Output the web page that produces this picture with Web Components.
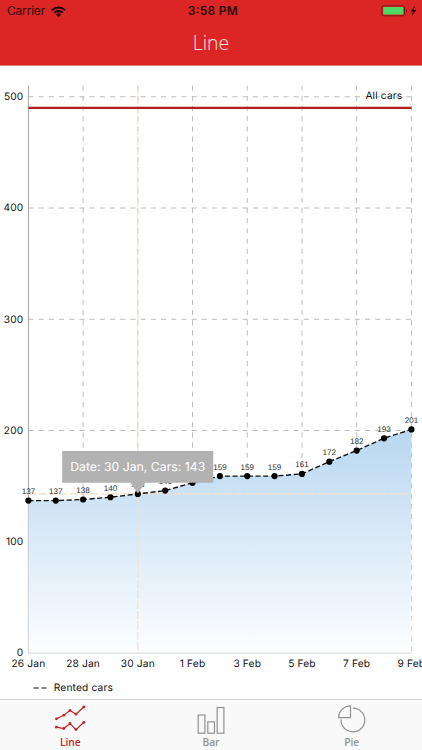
<!DOCTYPE html>
<html lang="en">
<head>
<meta charset="utf-8">
<meta name="viewport" content="width=device-width, initial-scale=1">
<title>Line</title>
<style>
  html, body {
    height: 100%;
    margin: 0;
  }

  body {
    font-family: Inter, "Liberation Sans", sans-serif;
    overflow: hidden;
  }
</style>
</head>
<body>

<cars-app>
  <status-bar slot="header" carrier="Carrier" time="3:58 PM"></status-bar>
  <nav-title slot="header">Line</nav-title>
  <line-chart></line-chart>
  <tab-bar slot="footer">
    <tab-item icon="line" active>Line</tab-item>
    <tab-item icon="bar">Bar</tab-item>
    <tab-item icon="pie">Pie</tab-item>
  </tab-bar>
</cars-app>

<script>
class CarsApp extends HTMLElement {

  constructor () {
    super()
    this.shadow = this.attachShadow({ mode: 'open' })
  }

  connectedCallback () {
    this.shadow.innerHTML =
    /*html*/`
    <style>
    :host {
      background-color: #fff;
      display: flex;
      flex-direction: column;
      height: 750px;
      overflow: hidden;
      width: 422px;
    }

    header {
      background-color: #dc2626;
      border-bottom: 1px solid #e98080;
      box-sizing: border-box;
      flex: none;
      height: 66px;
    }

    main {
      flex: 1;
      min-height: 0;
    }
    </style>

    <header><slot name="header"></slot></header>
    <main><slot></slot></main>
    <slot name="footer"></slot>
    `
  }
}

class StatusBar extends HTMLElement {

  constructor () {
    super()
    this.shadow = this.attachShadow({ mode: 'open' })
  }

  connectedCallback () {
    this.shadow.innerHTML =
    /*html*/`
    <style>
    :host {
      align-items: center;
      box-sizing: border-box;
      color: #2b0606;
      display: grid;
      font-size: 12px;
      grid-template-columns: 1fr auto 1fr;
      height: 22px;
      line-height: 22px;
      padding: 0 5px 0 7px;
    }

    svg {
      display: block;
    }

    .left, .right {
      align-items: center;
      display: flex;
      gap: 5px;
    }

    .right {
      justify-content: flex-end;
    }

    .time {
      font-weight: 600;
    }
    </style>

    <div class="left">
      <svg class="carrier" width="39" height="22">
        <text x="0" y="15.2" textLength="38.2" fill="currentColor">${this.getAttribute('carrier')}</text>
      </svg>
      <svg width="15" height="11" viewBox="0 0 15 11" fill="none" stroke="#1d0303" stroke-width="2.1">
        <path d="M.9 4.2a9.4 9.4 0 0 1 13.2 0"/>
        <path d="M3.3 6.8a6 6 0 0 1 8.4 0"/>
        <path d="M7.5 10.9L5.1 8.5a3.4 3.4 0 0 1 4.8 0z" fill="#1d0303" stroke="none"/>
      </svg>
    </div>
    <svg class="time" width="51" height="22">
      <text x=".8" y="15.2" textLength="50" fill="currentColor">${this.getAttribute('time')}</text>
    </svg>
    <div class="right">
      <svg width="36" height="12" viewBox="0 0 36 12">
        <rect x=".9" y=".8" width="22.6" height="10" rx="1.8" fill="#dc2626" stroke="#861313"/>
        <rect x="2.2" y="2.1" width="20" height="7.4" rx=".8" fill="#50d965"/>
        <path d="M25 4v3.6c1.4-.6 1.4-3 0-3.6z" fill="#861313"/>
        <path d="M34 .8L29.7 6.5h2.4L30.9 11l4.4-5.9h-2.5z" fill="#1d0303"/>
      </svg>
    </div>
    `
  }
}

class NavTitle extends HTMLElement {

  constructor () {
    super()
    this.shadow = this.attachShadow({ mode: 'open' })
  }

  connectedCallback () {
    this.shadow.innerHTML =
    /*html*/`
    <style>
    :host {
      color: #fbe3e3;
      display: block;
      font-family: "Open Sans", "Noto Sans", sans-serif;
      font-size: 19.4px;
      font-weight: 300;
      height: 43px;
      line-height: 41px;
      text-align: center;
    }
    </style>
    <slot></slot>
    `
  }
}

class LineChart extends HTMLElement {

  constructor () {
    super()
    this.shadow = this.attachShadow({ mode: 'open' })

    this.data = []
    this.selected = 4
    this.limit = 490
  }

  connectedCallback () {
    this.loadData()
    this.render()
  }

  loadData () {
    this.data = [
      { date: '26 Jan', cars: 137 },
      { date: '27 Jan', cars: 137 },
      { date: '28 Jan', cars: 138 },
      { date: '29 Jan', cars: 140 },
      { date: '30 Jan', cars: 143 },
      { date: '31 Jan', cars: 146 },
      { date: '1 Feb', cars: 153 },
      { date: '2 Feb', cars: 159 },
      { date: '3 Feb', cars: 159 },
      { date: '4 Feb', cars: 159 },
      { date: '5 Feb', cars: 161 },
      { date: '6 Feb', cars: 172 },
      { date: '7 Feb', cars: 182 },
      { date: '8 Feb', cars: 193 },
      { date: '9 Feb', cars: 201 }
    ]
  }

  render () {
    // plot area, in the coordinates of the svg
    const left = 28.4
    const right = 411.4
    const top = 19.6
    const bottom = 587

    const x = i => left + i * (right - left) / (this.data.length - 1)
    const y = value => bottom - value * 1.1125

    const points = this.data.map((d, i) => `${x(i).toFixed(2)},${y(d.cars).toFixed(2)}`)
    const current = this.data[this.selected]
    const cx = x(this.selected)
    const cy = y(current.cars)

    const rows = [100, 200, 300, 400, 500].map(v =>
      `<path d="M${left} ${y(v)}H${right}"/>`).join('')

    const columns = this.data.map((d, i) =>
      i % 2 === 0 && i > 0 ? `<path d="M${x(i)} ${top}V${bottom}"/>` : '').join('')

    const yLabels = [0, 100, 200, 300, 400, 500].map(v =>
      `<text x="23.4" y="${y(v) + 3.3}">${v}</text>`).join('')

    const xLabels = this.data.map((d, i) =>
      i % 2 === 0 ? `<text x="${x(i)}" y="601.3">${d.date}</text>` : '').join('')

    const dots = this.data.map((d, i) =>
      `<circle cx="${x(i)}" cy="${y(d.cars)}" r="3.1"/>`).join('')

    const values = this.data.map((d, i) =>
      `<text x="${x(i)}" y="${y(d.cars) - 6.6}">${d.cars}</text>`).join('')

    this.shadow.innerHTML =
    /*html*/`
    <style>
    :host {
      display: block;
      height: 100%;
    }

    svg {
      display: block;
    }

    text {
      text-rendering: geometricPrecision;
    }

    .grid path {
      fill: none;
      stroke: #bcbcbc;
      stroke-dasharray: 5.1 5.1;
    }

    .axis {
      fill: #111;
      font-size: 10.2px;
      letter-spacing: .15px;
    }

    .y-axis {
      text-anchor: end;
    }

    .x-axis {
      text-anchor: middle;
    }

    .values {
      fill: #333;
      font-family: "Liberation Sans", sans-serif;
      font-size: 8.1px;
      text-anchor: middle;
    }

    .highlight path {
      fill: none;
      stroke: #f8dfc6;
      stroke-dasharray: 8.2 2.1;
      stroke-width: 1.2;
    }
    </style>

    <svg width="422" height="633" viewBox="0 0 422 633">
      <defs>
        <linearGradient id="area" gradientUnits="userSpaceOnUse" x1="0" y1="${y(201)}" x2="0" y2="${bottom}">
          <stop offset="0" stop-color="#b8d7f0"/>
          <stop offset="1" stop-color="#fdfeff"/>
        </linearGradient>
      </defs>

      <g class="grid">${rows}${columns}</g>
      <path d="M${left} ${top}V${bottom}" stroke="#a3a3a3"/>
      <path d="M${left} ${bottom}H${right}" stroke="#c8c8c8"/>

      <polygon points="${left},${bottom - .5} ${points.join(' ')} ${right},${bottom - .5}" fill="url(#area)"/>
      <g class="highlight">
        <path d="M${cx} ${top}V${bottom}"/>
        <path d="M${left} ${cy}H${right}"/>
      </g>
      <polyline points="${points.join(' ')}" fill="none" stroke="#111" stroke-width="1.4" stroke-dasharray="5.1 2.55"/>
      <g fill="#000">${dots}</g>
      <g class="values">${values}</g>

      <path d="M${left} ${y(this.limit)}H${right}" stroke="#b81c20" stroke-width="2.1"/>
      <text class="axis" x="402.3" y="33.3" text-anchor="end">All cars</text>

      <g class="axis y-axis">${yLabels}</g>
      <g class="axis x-axis">${xLabels}</g>

      <path d="M33.6 622H47" stroke="#111" stroke-width="1.2" stroke-dasharray="5.1 2.8"/>
      <text class="axis" x="53.8" y="625.4">Rented cars</text>

      <path d="M62.2 385H213.3V416.8H${cx + 7.5}L${cx} ${cy - .5}L${cx - 7.5} 416.8H62.2z" fill="#b2b2b2"/>
      <text x="70.2" y="405.4" fill="#fff" font-size="12.24" textLength="135">Date: ${current.date}, Cars: ${current.cars}</text>
    </svg>
    `
  }
}

class TabBar extends HTMLElement {

  constructor () {
    super()
    this.shadow = this.attachShadow({ mode: 'open' })
  }

  connectedCallback () {
    this.shadow.innerHTML =
    /*html*/`
    <style>
    :host {
      background-color: #f9f9f9;
      border-top: 1px solid #d4d4d4;
      box-sizing: border-box;
      display: grid;
      flex: none;
      grid-template-columns: repeat(3, 1fr);
      height: 51px;
    }
    </style>
    <slot></slot>
    `
  }
}

class TabItem extends HTMLElement {

  constructor () {
    super()
    this.shadow = this.attachShadow({ mode: 'open' })

    this.icons = {
      line: `
        <path d="M2.4 18.8L9.8 15.2L16 10.4L22 14.2L29.8 7"/>
        <path d="M2.4 27.2L9.8 28.5L16 23.5L22 29.6L29.8 22.3"/>
        <g fill="currentColor" stroke="none">
          <circle cx="2.4" cy="18.8" r="1.4"/><circle cx="9.8" cy="15.2" r="1.4"/><circle cx="16" cy="10.4" r="1.4"/><circle cx="22" cy="14.2" r="1.4"/><circle cx="29.8" cy="7" r="1.4"/>
          <circle cx="2.4" cy="27.2" r="1.4"/><circle cx="9.8" cy="28.5" r="1.4"/><circle cx="16" cy="23.5" r="1.4"/><circle cx="22" cy="29.6" r="1.4"/><circle cx="29.8" cy="22.3" r="1.4"/>
        </g>`,
      bar: `
        <rect x="3.2" y="15" width="6.7" height="18.2"/>
        <rect x="12.8" y="21.8" width="6.7" height="11.4"/>
        <rect x="22.2" y="7.5" width="6.7" height="25.7"/>`,
      pie: `
        <path d="M16.8 8.1A11.9 11.9 0 1 1 5 19.6"/>
        <path d="M14.5 17.6V5.8A11.8 11.8 0 0 0 2.7 17.6z"/>`
    }
  }

  connectedCallback () {
    this.shadow.innerHTML =
    /*html*/`
    <style>
    :host {
      align-items: center;
      color: #929292;
      display: flex;
      flex-direction: column;
      font-family: "Open Sans", "Noto Sans", sans-serif;
      font-size: 10.2px;
      font-weight: 600;
      line-height: 13px;
    }

    :host([active]) {
      color: #c42227;
    }

    svg {
      display: block;
      fill: none;
      flex: none;
      height: 36px;
      stroke: currentColor;
      stroke-width: 1.2;
      width: 32px;
    }
    </style>

    <svg viewBox="0 0 32 36">${this.icons[this.getAttribute('icon')]}</svg>
    <span><slot></slot></span>
    `
  }
}

customElements.define('cars-app', CarsApp);
customElements.define('status-bar', StatusBar);
customElements.define('nav-title', NavTitle);
customElements.define('line-chart', LineChart);
customElements.define('tab-bar', TabBar);
customElements.define('tab-item', TabItem);
</script>
</body>
</html>
